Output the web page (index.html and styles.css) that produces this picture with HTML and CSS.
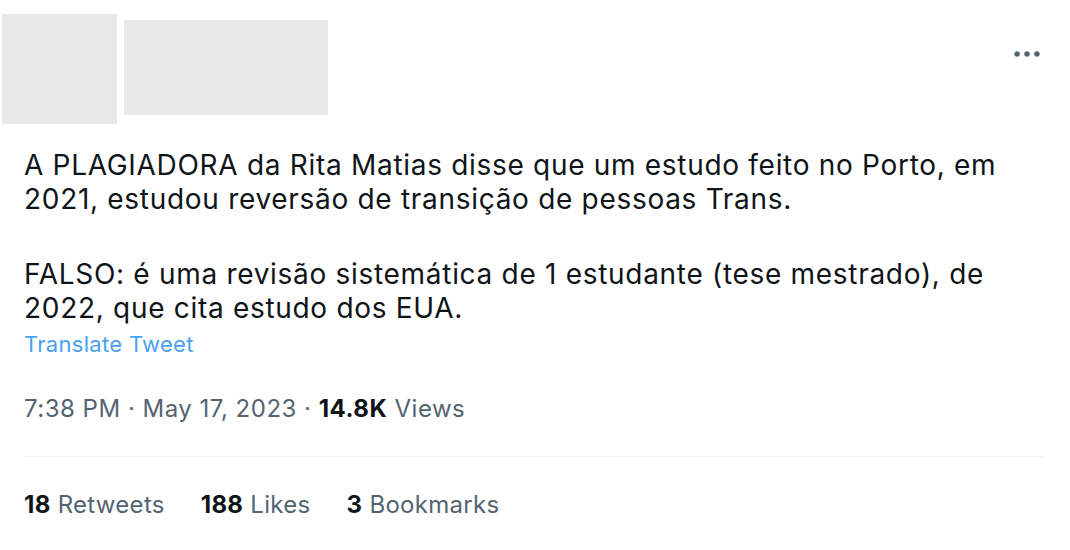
FILE: index.html
```html
<!DOCTYPE html>
<html lang="en">
<head>
    <meta charset="UTF-8">
    <meta name="viewport" content="width=device-width, initial-scale=1.0">
    <title>Tweet</title>
    <link rel="stylesheet" href="styles.css">
</head>
<body>

<article class="tweet">
    <header class="tweet-head">
        <div class="avatar"></div>
        <div class="author"></div>
        <button class="more" aria-label="More">
            <svg viewBox="0 0 24 24" width="34" height="34">
                <path d="M3 12c0-1.1.9-2 2-2s2 .9 2 2-.9 2-2 2-2-.9-2-2zm9 2c1.1 0 2-.9 2-2s-.9-2-2-2-2 .9-2 2 .9 2 2 2zm7 0c1.1 0 2-.9 2-2s-.9-2-2-2-2 .9-2 2 .9 2 2 2z"></path>
            </svg>
        </button>
    </header>

    <div class="tweet-body">
        <p class="tweet-text">A PLAGIADORA da Rita Matias disse que um estudo feito no Porto, em 2021, estudou reversão de transição de pessoas Trans.</p>
        <p class="tweet-text second">FALSO: é uma revisão sistemática de 1 estudante (tese mestrado), de 2022, que cita estudo dos EUA.</p>
        <a href="#" class="translate">Translate Tweet</a>

        <div class="meta">
            <span>7:38 PM</span> · <span>May 17, 2023</span> · <b>14.8K</b> Views
        </div>

        <div class="stats">
            <span><b>18</b> Retweets</span>
            <span><b>188</b> Likes</span>
            <span><b>3</b> Bookmarks</span>
        </div>
    </div>
</article>

</body>
</html>
```

FILE: styles.css
```css
body {
    margin: 0;
    padding: 0;
    background-color: white;
    font-family: Inter, "Noto Sans", sans-serif;
    color: #0f1419;
}
.tweet {
    width: 1070px;
}
.tweet-head {
    display: flex;
    align-items: flex-start;
    padding-left: 2px;
}
.avatar {
    width: 115px;
    height: 110px;
    margin-top: 14px;
    background-color: #e8e8e8;
}
.author {
    width: 204px;
    height: 95px;
    margin-top: 20px;
    margin-left: 7px;
    background-color: #e8e8e8;
}
.more {
    margin-left: auto;
    margin-right: 26px;
    margin-top: 37px;
    padding: 0;
    border: none;
    background: none;
    width: 34px;
    height: 34px;
    fill: #536471;
    cursor: pointer;
}
.more svg {
    display: block;
}
.tweet-body {
    padding: 0 26px 0 24px;
}
.tweet-text {
    margin: 24px 0 0 0;
    font-size: 28px;
    line-height: 34px;
    letter-spacing: 0.7px;
}
.tweet-text.second {
    margin-top: 41px;
}
.translate {
    display: block;
    margin-top: 5px;
    font-size: 22px;
    line-height: 28px;
    letter-spacing: 0.3px;
    color: #4aa1f0;
    text-decoration: none;
}
.meta {
    margin-top: 37px;
    padding-bottom: 33px;
    border-bottom: 1px solid #eff3f4;
    font-size: 24px;
    line-height: 28px;
    letter-spacing: 0.5px;
    color: #536471;
}
.meta b,
.stats b {
    color: #0f1419;
    font-weight: 700;
}
.stats {
    display: flex;
    gap: 36px;
    margin-top: 34px;
    font-size: 24px;
    line-height: 28px;
    letter-spacing: 0.3px;
    color: #536471;
}
```
